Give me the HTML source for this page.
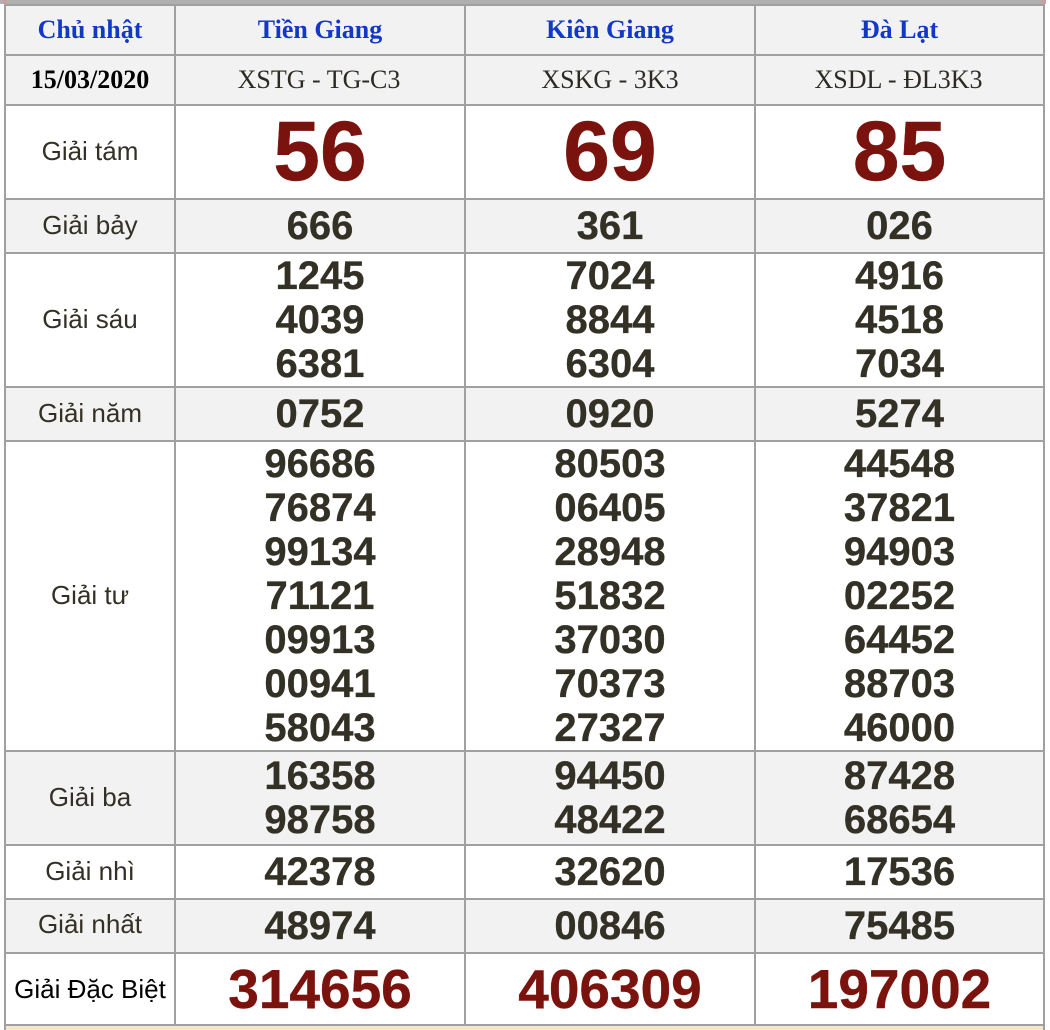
<!DOCTYPE html>
<html><head><meta charset="utf-8">
<style>
html,body{margin:0;padding:0;background:#fff}
#p{position:relative;width:1050px;height:1030px;overflow:hidden;background:#fff}
.b{position:absolute}
.c{position:absolute;text-align:center;white-space:pre-line}
.h{position:absolute;background:#a0a0a0;left:4px;width:1041px;height:2px}
.v{position:absolute;background:#a0a0a0;top:4px;width:2px;height:1026px}
.g{font:26px "Liberation Sans",sans-serif;color:#333025;left:6px;width:168px}
.n{font:bold 40px/44px "Liberation Sans",sans-serif;color:#333025;-webkit-text-stroke:.3px #333025}
.r{color:#7a130d;font-weight:bold;font-family:"Liberation Sans",sans-serif;-webkit-text-stroke:.4px #7a130d}
.t{font:bold 26px "Liberation Serif",serif;color:#1338c8}
.s{font:26px "Liberation Serif",serif;color:#2c2a22}
.a{left:176px;width:288px}.d{left:466px;width:288px}.e{left:756px;width:287px}
</style></head><body><div id="p">
<div class="b" style="left:0;top:0;width:1045px;height:4px;background:#b0b0b0"></div>
<div class="b" style="left:3px;top:0;width:4px;height:4px;background:#c8a0a0"></div>
<div class="b" style="left:1041px;top:0;width:5px;height:4px;background:#c8a0a0"></div>
<div class="b" style="left:6px;top:1026px;width:1037px;height:4px;background:#f5e8c6"></div>
<div class="b" style="left:6px;top:6px;width:1037px;height:98px;background:#f2f2f2"></div>
<div class="b" style="left:6px;top:200px;width:1037px;height:52px;background:#f2f2f2"></div>
<div class="b" style="left:6px;top:388px;width:1037px;height:52px;background:#f2f2f2"></div>
<div class="b" style="left:6px;top:752px;width:1037px;height:92px;background:#f2f2f2"></div>
<div class="b" style="left:6px;top:900px;width:1037px;height:52px;background:#f2f2f2"></div>
<div class="h" style="top:4px"></div><div class="h" style="top:54px"></div><div class="h" style="top:104px"></div><div class="h" style="top:198px"></div><div class="h" style="top:252px"></div><div class="h" style="top:386px"></div><div class="h" style="top:440px"></div><div class="h" style="top:750px"></div><div class="h" style="top:844px"></div><div class="h" style="top:898px"></div><div class="h" style="top:952px"></div><div class="h" style="top:1024px"></div>
<div class="v" style="left:4px"></div><div class="v" style="left:174px;height:1022px"></div><div class="v" style="left:464px;height:1022px"></div><div class="v" style="left:754px;height:1022px"></div><div class="v" style="left:1043px"></div>

<div class="c t" style="left:6px;width:168px;top:15px">Chủ nhật</div>
<div class="c t a" style="top:15px">Tiền Giang</div>
<div class="c t d" style="top:15px">Kiên Giang</div>
<div class="c t e" style="top:15px">Đà Lạt</div>
<div class="c" style="left:6px;width:168px;top:65px;font:bold 26px 'Liberation Serif',serif;color:#000">15/03/2020</div>
<div class="c s a" style="top:65px;left:175px">XSTG - TG-C3</div>
<div class="c s d" style="top:65px">XSKG - 3K3</div>
<div class="c s e" style="top:65px;left:755px">XSDL - ĐL3K3</div>

<div class="c g" style="top:136px">Giải tám</div>
<div class="c r a" style="top:104px;font-size:84px;line-height:94px">56</div>
<div class="c r d" style="top:104px;font-size:84px;line-height:94px">69</div>
<div class="c r e" style="top:104px;font-size:84px;line-height:94px">85</div>

<div class="c g" style="top:210px">Giải bảy</div>
<div class="c n a" style="top:204px">666</div><div class="c n d" style="top:204px">361</div><div class="c n e" style="top:204px">026</div>

<div class="c g" style="top:304px">Giải sáu</div>
<div class="c n a" style="top:254px">1245
4039
6381</div><div class="c n d" style="top:254px">7024
8844
6304</div><div class="c n e" style="top:254px">4916
4518
7034</div>

<div class="c g" style="top:398px">Giải năm</div>
<div class="c n a" style="top:392px">0752</div><div class="c n d" style="top:392px">0920</div><div class="c n e" style="top:392px">5274</div>

<div class="c g" style="top:580px">Giải tư</div>
<div class="c n a" style="top:442px">96686
76874
99134
71121
09913
00941
58043</div><div class="c n d" style="top:442px">80503
06405
28948
51832
37030
70373
27327</div><div class="c n e" style="top:442px">44548
37821
94903
02252
64452
88703
46000</div>

<div class="c g" style="top:782px">Giải ba</div>
<div class="c n a" style="top:754px">16358
98758</div><div class="c n d" style="top:754px">94450
48422</div><div class="c n e" style="top:754px">87428
68654</div>

<div class="c g" style="top:856px">Giải nhì</div>
<div class="c n a" style="top:850px">42378</div><div class="c n d" style="top:850px">32620</div><div class="c n e" style="top:850px">17536</div>

<div class="c g" style="top:909px">Giải nhất</div>
<div class="c n a" style="top:904px">48974</div><div class="c n d" style="top:904px">00846</div><div class="c n e" style="top:904px">75485</div>

<div class="c" style="left:6px;width:168px;top:974px;font:26px 'Liberation Sans',sans-serif;color:#000">Giải Đặc Biệt</div>
<div class="c r a" style="top:954px;font-size:55px;line-height:70px">314656</div>
<div class="c r d" style="top:954px;font-size:55px;line-height:70px">406309</div>
<div class="c r e" style="top:954px;font-size:55px;line-height:70px">197002</div>
</div></body></html>
